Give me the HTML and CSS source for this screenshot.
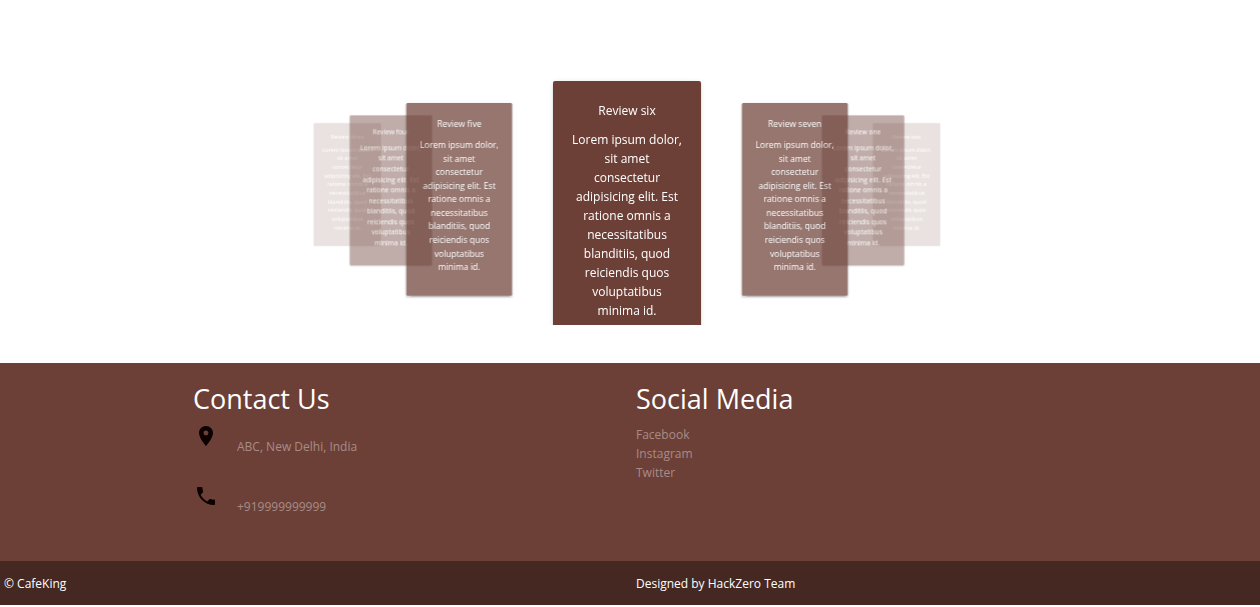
FILE: index.html
```html
<!DOCTYPE html>
<html lang="en">
<head>
<meta charset="utf-8">
<title>CafeKing</title>
<link rel="stylesheet" href="styles.css">
</head>
<body>
<main class="carousel">
  <article class="card left-3"><h3 class="card-title">Review three</h3><p class="card-text">Lorem ipsum dolor,<br>sit amet<br>consectetur<br>adipisicing elit. Est<br>ratione omnis a<br>necessitatibus<br>blanditiis, quod<br>reiciendis quos<br>voluptatibus<br>minima id.</p></article>
  <article class="card left-2"><h3 class="card-title">Review four</h3><p class="card-text">Lorem ipsum dolor,<br>sit amet<br>consectetur<br>adipisicing elit. Est<br>ratione omnis a<br>necessitatibus<br>blanditiis, quod<br>reiciendis quos<br>voluptatibus<br>minima id.</p></article>
  <article class="card left-1"><h3 class="card-title">Review five</h3><p class="card-text">Lorem ipsum dolor,<br>sit amet<br>consectetur<br>adipisicing elit. Est<br>ratione omnis a<br>necessitatibus<br>blanditiis, quod<br>reiciendis quos<br>voluptatibus<br>minima id.</p></article>
  <article class="card right-3"><h3 class="card-title">Review two</h3><p class="card-text">Lorem ipsum dolor,<br>sit amet<br>consectetur<br>adipisicing elit. Est<br>ratione omnis a<br>necessitatibus<br>blanditiis, quod<br>reiciendis quos<br>voluptatibus<br>minima id.</p></article>
  <article class="card right-2"><h3 class="card-title">Review one</h3><p class="card-text">Lorem ipsum dolor,<br>sit amet<br>consectetur<br>adipisicing elit. Est<br>ratione omnis a<br>necessitatibus<br>blanditiis, quod<br>reiciendis quos<br>voluptatibus<br>minima id.</p></article>
  <article class="card right-1"><h3 class="card-title">Review seven</h3><p class="card-text">Lorem ipsum dolor,<br>sit amet<br>consectetur<br>adipisicing elit. Est<br>ratione omnis a<br>necessitatibus<br>blanditiis, quod<br>reiciendis quos<br>voluptatibus<br>minima id.</p></article>
  <article class="card front"><h3 class="card-title">Review six</h3><p class="card-text">Lorem ipsum dolor,<br>sit amet<br>consectetur<br>adipisicing elit. Est<br>ratione omnis a<br>necessitatibus<br>blanditiis, quod<br>reiciendis quos<br>voluptatibus<br>minima id.</p></article>
</main>
<footer class="footer">
  <div class="footer-main">
    <section class="footer-col">
      <h2 class="footer-title">Contact Us</h2>
      <div class="contact">
        <svg class="icon" viewBox="0 0 24 24" aria-hidden="true"><path d="M12 2C8.13 2 5 5.13 5 9c0 5.25 7 13 7 13s7-7.75 7-13c0-3.87-3.13-7-7-7zm0 9.5a2.5 2.5 0 0 1 0-5 2.5 2.5 0 0 1 0 5z"/></svg>
        <span class="contact-text">ABC, New Delhi, India</span>
      </div>
      <div class="contact">
        <svg class="icon" viewBox="0 0 24 24" aria-hidden="true"><path d="M6.62 10.79c1.44 2.83 3.76 5.14 6.59 6.59l2.2-2.2c.27-.27.67-.36 1.02-.24 1.12.37 2.33.57 3.57.57.55 0 1 .45 1 1V20c0 .55-.45 1-1 1-9.39 0-17-7.61-17-17 0-.55.45-1 1-1h3.5c.55 0 1 .45 1 1 0 1.25.2 2.45.57 3.57.11.35.03.74-.25 1.02l-2.2 2.2z"/></svg>
        <span class="contact-text">+919999999999</span>
      </div>
    </section>
    <section class="footer-col">
      <h2 class="footer-title">Social Media</h2>
      <ul class="links">
        <li><a class="link" href="#">Facebook</a></li>
        <li><a class="link" href="#">Instagram</a></li>
        <li><a class="link" href="#">Twitter</a></li>
      </ul>
    </section>
  </div>
  <div class="copyright">
    <span>© CafeKing</span>
    <span>Designed by HackZero Team</span>
  </div>
</footer>
</body>
</html>
```
FILE: styles.css
```css
* { box-sizing: border-box; }
body {
  margin: 0;
  background: #fff;
  color: #fff;
  font-family: "Open Sans", "Noto Sans", sans-serif;
  font-size: 12px;
  line-height: 19px;
}
h2, h3, p, ul { margin: 0; padding: 0; font-weight: 400; }
.carousel {
  position: relative;
  height: 325px;
  margin: 0 6px 38px 0;
  overflow: hidden;
  perspective: 500px;
  perspective-origin: 50% 158px;
}
.card {
  position: absolute;
  top: 81px;
  left: calc(50% - 74px);
  width: 148px;
  height: 270px;
  padding: 20px 0;
  border-radius: 2px;
  background: #6d4037;
  box-shadow: 0 2px 2px rgba(0, 0, 0, .14), 0 1px 5px rgba(0, 0, 0, .12), 0 3px 1px -2px rgba(0, 0, 0, .2);
  text-align: center;
}
.left-3 { transform: translate3d(-615px, 0, -600px); opacity: .15; }
.left-2 { transform: translate3d(-425px, 0, -400px); opacity: .43; }
.left-1 { transform: translate3d(-235px, 0, -200px); opacity: .72; }
.right-3 { transform: translate3d(615px, 0, -600px); opacity: .15; }
.right-2 { transform: translate3d(425px, 0, -400px); opacity: .43; }
.right-1 { transform: translate3d(235px, 0, -200px); opacity: .72; }
.card-title { margin-bottom: 10px; font-size: 12px; line-height: 19px; }
.card-text { line-height: 19px; }
.footer { background: #6d4037; }
.footer-main {
  display: grid;
  grid-template-columns: 1fr 1fr;
  column-gap: 8px;
  width: 70%;
  min-height: 198px;
  margin: 0 auto;
  padding: 16px 0 0 4px;
}
.footer-title { margin-bottom: 7px; font-size: 27px; line-height: 39px; }
.contact { display: flex; gap: 18px; height: 60px; }
.icon { flex: none; width: 26px; height: 24px; margin-top: -1px; fill: #0d0201; }
.contact-text { padding-top: 12px; color: #a68c87; }
.links { list-style: none; }
.link { color: #a68c87; text-decoration: none; }
.copyright {
  display: grid;
  grid-template-columns: 1fr 1fr;
  column-gap: 8px;
  padding: 13px 0 12px 4px;
  background: #452822;
}
```
